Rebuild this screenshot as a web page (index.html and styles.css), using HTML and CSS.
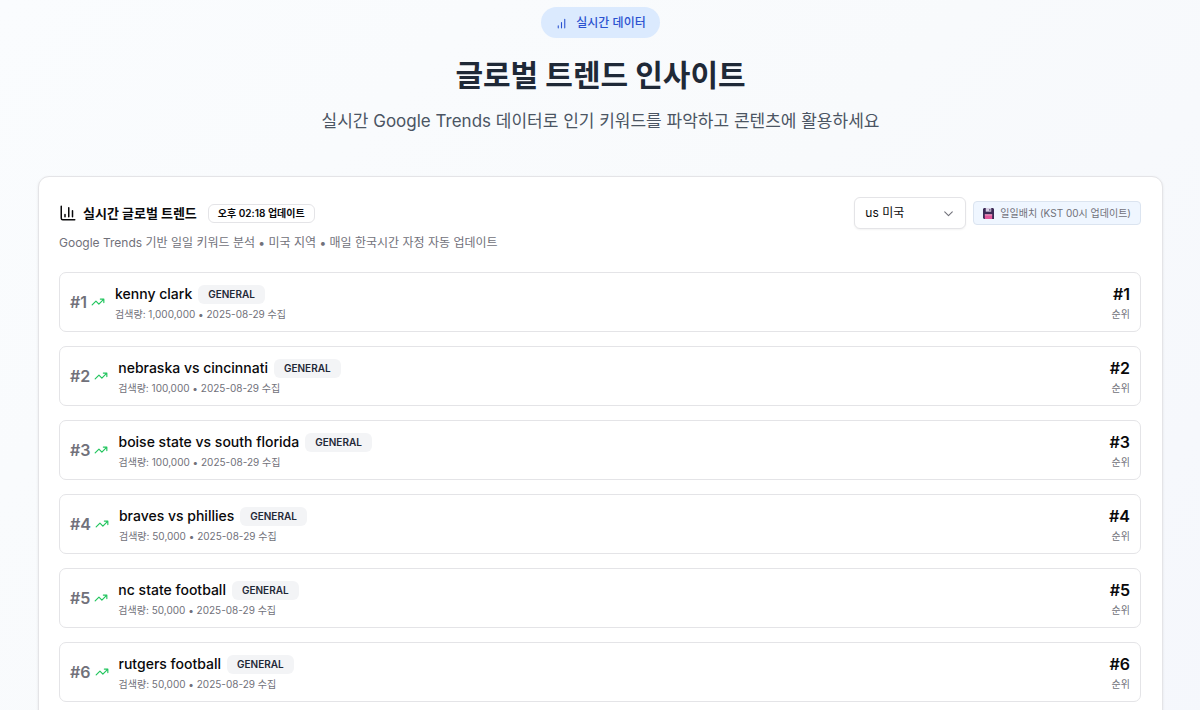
FILE: index.html
```html
<!DOCTYPE html>
<html lang="ko">
<head>
<meta charset="utf-8">
<meta name="viewport" content="width=device-width, initial-scale=1">
<title>글로벌 트렌드 인사이트</title>
<link rel="stylesheet" href="styles.css">
</head>
<body>
<svg class="sprite" aria-hidden="true">
  <symbol id="trend" viewBox="0 0 24 24"><path d="M22 7 13.500 15.500 8.500 10.500 2 17M16 7h6v6"/></symbol>
</svg>
<main class="page">
  <header class="hero">
    <span class="pill">
      <svg class="pill-icon" viewBox="0 0 24 24" aria-hidden="true"><path d="M12 20V10M18 20V4M6 20v-4"/></svg>
      실시간 데이터
    </span>
    <h1 class="hero-title">글로벌 트렌드 인사이트</h1>
    <p class="hero-text">실시간 Google Trends 데이터로 인기 키워드를 파악하고 콘텐츠에 활용하세요</p>
  </header>

  <section class="card">
    <div class="card-head">
      <div class="card-intro">
        <div class="card-title-row">
          <svg class="chart-icon" viewBox="0 0 24 24" aria-hidden="true"><path d="M3 3v16a2 2 0 0 0 2 2h16M18 17V9M13 17V5M8 17v-3"/></svg>
          <h2 class="card-title">실시간 글로벌 트렌드</h2>
          <span class="time-badge">오후 02:18 업데이트</span>
        </div>
        <p class="card-text">Google Trends 기반 일일 키워드 분석 • 미국 지역 • 매일 한국시간 자정 자동 업데이트</p>
      </div>
      <div class="controls">
        <div class="select-wrap">
          <select class="select" aria-label="지역"><option>us 미국</option></select>
          <svg class="chevron" viewBox="0 0 24 24" aria-hidden="true"><path d="m5 9 7 7 7-7"/></svg>
        </div>
        <span class="batch">
          <svg class="disk" viewBox="0 0 12 12" aria-hidden="true"><path fill="#3d2b56" d="M1 0h10l1 1v11H1L0 11V1z"/><path fill="#d8cfe4" d="M3 0h6v4H3z"/><path fill="#3d2b56" d="M7 1h1v2H7z"/><path fill="#e2589b" d="M2 7h8v5H2z"/><path fill="#f3b3d0" d="M2 7h8v1H2z"/></svg>
          일일배치 (KST 00시 업데이트)
        </span>
      </div>
    </div>

    <ol class="list">
      <li class="row">
        <span class="rank">#1</span><svg class="trend" aria-hidden="true"><use href="#trend"/></svg>
        <div class="info"><div class="name-row"><h3 class="name">kenny clark</h3><span class="tag">GENERAL</span></div><p class="meta">검색량: 1,000,000 • 2025-08-29 수집</p></div>
        <div class="place"><div class="place-num">#1</div><div class="meta">순위</div></div>
      </li>
      <li class="row">
        <span class="rank">#2</span><svg class="trend" aria-hidden="true"><use href="#trend"/></svg>
        <div class="info"><div class="name-row"><h3 class="name">nebraska vs cincinnati</h3><span class="tag">GENERAL</span></div><p class="meta">검색량: 100,000 • 2025-08-29 수집</p></div>
        <div class="place"><div class="place-num">#2</div><div class="meta">순위</div></div>
      </li>
      <li class="row">
        <span class="rank">#3</span><svg class="trend" aria-hidden="true"><use href="#trend"/></svg>
        <div class="info"><div class="name-row"><h3 class="name">boise state vs south florida</h3><span class="tag">GENERAL</span></div><p class="meta">검색량: 100,000 • 2025-08-29 수집</p></div>
        <div class="place"><div class="place-num">#3</div><div class="meta">순위</div></div>
      </li>
      <li class="row">
        <span class="rank">#4</span><svg class="trend" aria-hidden="true"><use href="#trend"/></svg>
        <div class="info"><div class="name-row"><h3 class="name">braves vs phillies</h3><span class="tag">GENERAL</span></div><p class="meta">검색량: 50,000 • 2025-08-29 수집</p></div>
        <div class="place"><div class="place-num">#4</div><div class="meta">순위</div></div>
      </li>
      <li class="row">
        <span class="rank">#5</span><svg class="trend" aria-hidden="true"><use href="#trend"/></svg>
        <div class="info"><div class="name-row"><h3 class="name">nc state football</h3><span class="tag">GENERAL</span></div><p class="meta">검색량: 50,000 • 2025-08-29 수집</p></div>
        <div class="place"><div class="place-num">#5</div><div class="meta">순위</div></div>
      </li>
      <li class="row">
        <span class="rank">#6</span><svg class="trend" aria-hidden="true"><use href="#trend"/></svg>
        <div class="info"><div class="name-row"><h3 class="name">rutgers football</h3><span class="tag">GENERAL</span></div><p class="meta">검색량: 50,000 • 2025-08-29 수집</p></div>
        <div class="place"><div class="place-num">#6</div><div class="meta">순위</div></div>
      </li>
    </ol>
  </section>
</main>
</body>
</html>
```
FILE: styles.css
```css
* { box-sizing: border-box; }
body {
  margin: 0;
  color: #09090b;
  background: linear-gradient(135deg, #fafcfe, #f8fafc 50%, #f5f7fc);
  font-family: Inter, "Noto Sans CJK KR", sans-serif;
}
h1, h2, h3, p, ol { margin: 0; padding: 0; }
svg { flex: none; fill: none; stroke: currentColor; stroke-width: 2; stroke-linecap: round; stroke-linejoin: round; }
.sprite { display: none; }
.page { padding: 7px 37px 28px 38px; }

.hero { display: flex; flex-direction: column; align-items: center; text-align: center; }
.pill {
  display: flex; align-items: center; gap: 8px;
  padding: 6px 14px 5px;
  border-radius: 16px;
  background: #dbeafe; color: #2b52d0;
  font-size: 12px; font-weight: 500; line-height: 20px;
}
.pill-icon { width: 13px; height: 13px; }
.hero-title { margin-top: 14px; color: #1f2937; font-size: 30px; font-weight: 700; line-height: 46px; }
.hero-text { margin-top: 9px; color: #4b5563; font-size: 17px; font-weight: 400; line-height: 28px; }

.card {
  margin-top: 41px; padding: 20px 21px 22px 20px;
  border: 1px solid #e4e4e7; border-radius: 11px;
  background: #fff;
  box-shadow: 0 1px 3px rgba(0, 0, 0, .08);
}
.card-head { display: flex; justify-content: space-between; align-items: flex-start; }
.card-title-row { display: flex; align-items: center; height: 32px; }
.chart-icon { width: 18px; height: 18px; margin-right: 6px; }
.card-title { font-size: 13px; font-weight: 700; line-height: 20px; }
.time-badge {
  margin-left: 11px; padding: 0 9px;
  border: 1px solid #e4e4e7; border-radius: 6px;
  font-size: 10px; font-weight: 600; line-height: 17px;
}
.card-text { margin-top: 4px; color: #71717a; font-size: 12px; line-height: 20px; }
.controls { display: flex; align-items: center; gap: 7px; }
.select-wrap { position: relative; }
.select {
  display: block; width: 112px; height: 32px; padding: 0 10px;
  border: 1px solid #e4e4e7; border-radius: 6px;
  appearance: none; background: #fff; color: #09090b;
  box-shadow: 0 1px 2px rgba(0, 0, 0, .05);
  font: 12px/20px Inter, "Noto Sans CJK KR", sans-serif;
}
.chevron { position: absolute; right: 11px; top: 10px; width: 13px; height: 13px; color: #71717a; pointer-events: none; }
.batch {
  display: flex; align-items: center; gap: 6px;
  padding: 1px 9px;
  border: 1px solid #dbe4f0; border-radius: 4px;
  background: #eff6ff; color: #71717a;
  font-size: 10px; line-height: 20px;
}
.disk { width: 11px; height: 11px; stroke: none; }

.list { display: grid; gap: 14px; margin-top: 19px; list-style: none; }
.row {
  display: flex; align-items: center;
  min-height: 60px; padding: 8px 10px;
  border: 1px solid #e4e4e7; border-radius: 7px;
}
.rank { color: #71717a; font-size: 16px; font-weight: 600; line-height: 22px; }
.trend { width: 14px; height: 14px; margin: 0 10px 0 4px; color: #22c55e; }
.info, .place { padding-top: 2px; }
.info { flex: 1; }
.name-row { display: flex; align-items: center; gap: 6px; height: 22px; }
.name { font-size: 14px; font-weight: 500; line-height: 22px; }
.tag {
  padding: 0 10px; border-radius: 6px;
  background: #f3f4f6; color: #1f2937;
  font-size: 10px; font-weight: 600; line-height: 19px;
}
.meta { color: #71717a; font-size: 10px; line-height: 18px; }
.place { text-align: right; }
.place-num { font-size: 16px; font-weight: 600; line-height: 22px; }
```
